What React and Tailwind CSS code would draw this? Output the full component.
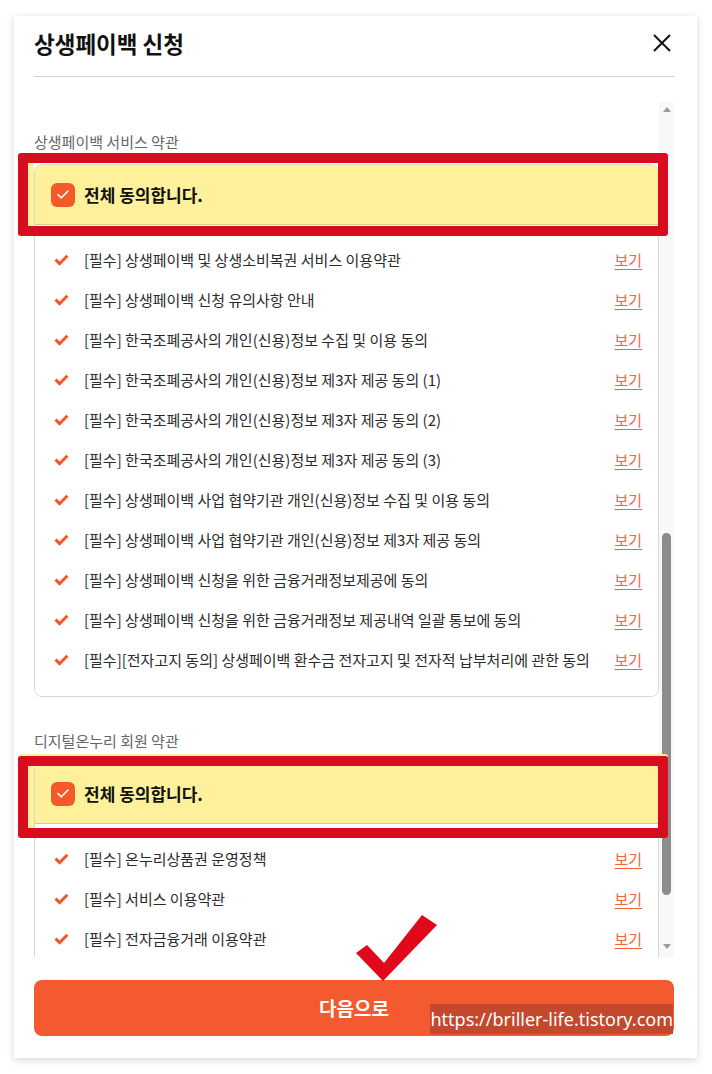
import React from 'react';

const payback = [
    '[필수] 상생페이백 및 상생소비복권 서비스 이용약관',
    '[필수] 상생페이백 신청 유의사항 안내',
    '[필수] 한국조폐공사의 개인(신용)정보 수집 및 이용 동의',
    '[필수] 한국조폐공사의 개인(신용)정보 제3자 제공 동의 (1)',
    '[필수] 한국조폐공사의 개인(신용)정보 제3자 제공 동의 (2)',
    '[필수] 한국조폐공사의 개인(신용)정보 제3자 제공 동의 (3)',
    '[필수] 상생페이백 사업 협약기관 개인(신용)정보 수집 및 이용 동의',
    '[필수] 상생페이백 사업 협약기관 개인(신용)정보 제3자 제공 동의',
    '[필수] 상생페이백 신청을 위한 금융거래정보제공에 동의',
    '[필수] 상생페이백 신청을 위한 금융거래정보 제공내역 일괄 통보에 동의',
    '[필수][전자고지 동의] 상생페이백 환수금 전자고지 및 전자적 납부처리에 관한 동의',
];

const onnuri = [
    '[필수] 온누리상품권 운영정책',
    '[필수] 서비스 이용약관',
    '[필수] 전자금융거래 이용약관',
];

function SmallCheck() {
    return (
        <svg width="15" height="12" viewBox="0 0 15 12" className="shrink-0">
            <path d="M1.5 5.6 L5.6 9.6 L13.4 1.8" fill="none" stroke="#f2582a" strokeWidth="3" />
        </svg>
    );
}

function AgreeBox({ title, items, spaced }) {
    return (
        <div className={spaced ? 'mt-[34px]' : ''}>
            <p className="text-[15px] leading-5 text-[#666] mb-3">{title}</p>
            <div className="border border-[#d6d6d6] rounded-lg overflow-hidden">
                <div className="h-[60px] bg-[#fff19c] border-b border-[#d6ca8c] flex items-center pl-4 gap-[9px]">
                    <span className="w-6 h-6 rounded-md bg-[#f4592a] flex items-center justify-center">
                        <svg width="14" height="11" viewBox="0 0 14 11">
                            <path d="M2 5.6 L5.4 8.8 L12 2" fill="none" stroke="#fff" strokeWidth="1.6" strokeLinecap="round" strokeLinejoin="round" />
                        </svg>
                    </span>
                    <span className="text-[17px] font-bold text-[#111]">전체 동의합니다.</span>
                </div>
                <div className="pt-[15px] pb-4 bg-white">
                    {items.map((item) => (
                        <div key={item} className="h-10 flex items-center pl-[19px] pr-4">
                            <SmallCheck />
                            <span className="ml-[15px] flex-1 text-[15px] text-[#2b2b2b] whitespace-nowrap">{item}</span>
                            <span className="text-[15px] text-[#f2643a] underline underline-offset-[3px] ml-3">보기</span>
                        </div>
                    ))}
                </div>
            </div>
        </div>
    );
}

export default function App() {
    return (
        <div className="min-h-[1074px] bg-white pt-4 font-['Noto_Sans_CJK_KR','Noto_Sans',sans-serif]">
            <div className="relative ml-[14px] w-[683px] bg-white shadow-[0_2px_8px_rgba(0,0,0,0.16)] pl-5 pr-[23px] pb-[22px]">
                <div className="flex items-center justify-between pt-3 pb-[18px] border-b border-[#d2d2d2]">
                    <h1 className="text-[22.5px] leading-[30px] font-bold text-[#111]">상생페이백 신청</h1>
                    <button type="button" className="w-6 h-6 flex items-center justify-center">
                        <svg width="18" height="18" viewBox="0 0 18 18">
                            <path d="M1 1 L17 17 M17 1 L1 17" stroke="#111" strokeWidth="2" />
                        </svg>
                    </button>
                </div>

                <div className="mt-[25px] flex h-[855px]">
                    <div className="flex-1 overflow-hidden pt-[30px]">
                        <AgreeBox title="상생페이백 서비스 약관" items={payback} />
                        <AgreeBox title="디지털온누리 회원 약관" items={onnuri} spaced />
                    </div>
                    <div className="w-[15px] bg-[#f8f8f8] flex flex-col">
                        <div className="h-[15px] flex items-center justify-center">
                            <span className="w-0 h-0 border-x-[4px] border-x-transparent border-b-[5px] border-b-[#9a9a9a]" />
                        </div>
                        <div className="flex-1">
                            <div className="mt-[416px] h-[362px] w-[9px] mx-auto rounded-full bg-[#8c8c8c]" />
                        </div>
                        <div className="h-[15px] flex items-start justify-center pt-[2px]">
                            <span className="w-0 h-0 border-x-[4px] border-x-transparent border-t-[5px] border-t-[#9a9a9a]" />
                        </div>
                    </div>
                </div>

                <button type="button" className="relative mt-[23px] w-full h-14 rounded-lg bg-[#f45a2f] text-white text-[19px] font-bold">
                    다음으로
                    <span className="absolute right-[1px] bottom-[2px] h-[30px] flex items-center bg-[#c4482b] text-white text-[18px] font-normal font-['Noto_Sans',sans-serif]">
                        https://briller-life.tistory.com
                    </span>
                </button>

                <div className="absolute left-[4px] top-[137px] w-[650px] h-[83px] border-[10px] border-[#d80c1f] rounded-[3px] shadow-[inset_6px_0_0_#fff09c] pointer-events-none" />
                <div className="absolute left-[4px] top-[740px] w-[650px] h-[82px] border-[10px] border-[#d80c1f] rounded-[3px] shadow-[inset_6px_0_0_#fff09c,0_-2px_0_#fff09c] pointer-events-none" />
                <svg className="absolute left-[336px] top-[894px] pointer-events-none" width="90" height="75" viewBox="0 0 90 75">
                    <polygon points="6,43 17,35 34,53 72,5 87,15 33,71" fill="#e0081a" />
                </svg>
            </div>
        </div>
    );
}
